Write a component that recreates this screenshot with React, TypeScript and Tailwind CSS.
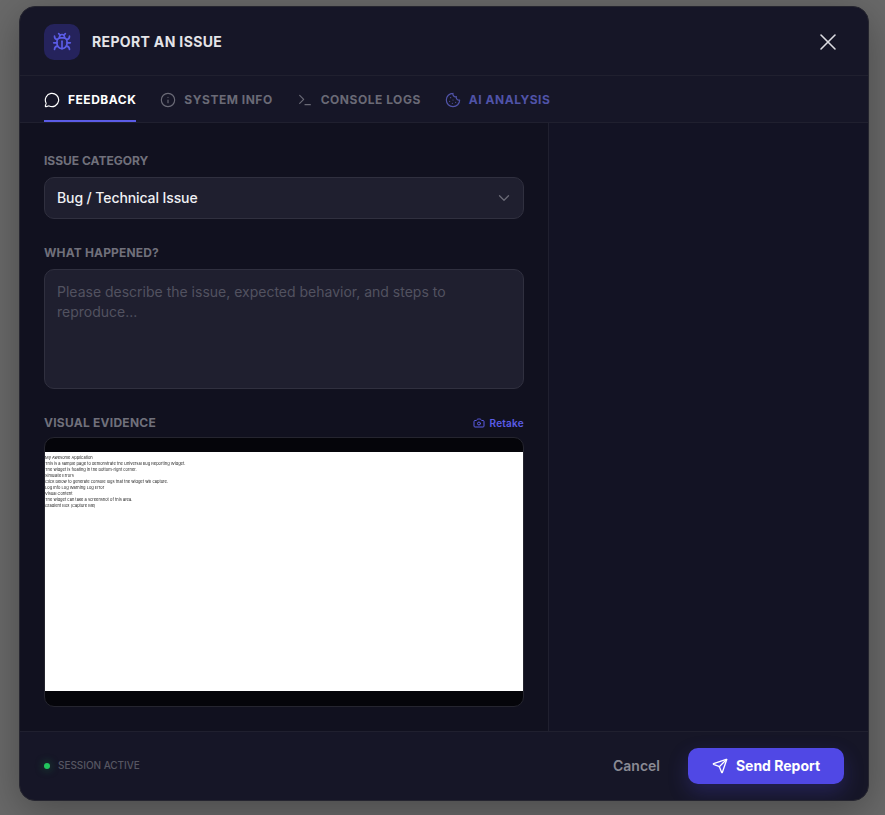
import React from 'react';
import { Bug, Camera, ChevronDown, Cookie, Info, MessageCircle, Send, Terminal, X } from 'lucide-react';

const tabs = [
  { name: 'FEEDBACK', icon: MessageCircle, className: 'text-white border-[#5b5ce6]' },
  { name: 'SYSTEM INFO', icon: Info, className: 'text-[#6a6a76] border-transparent' },
  { name: 'CONSOLE LOGS', icon: Terminal, className: 'text-[#6a6a76] border-transparent' },
  { name: 'AI ANALYSIS', icon: Cookie, className: 'text-[#5053a8] border-transparent' },
];

const shotLines = [
  'My Awesome Application',
  'This is a sample page to demonstrate the Universal Bug Reporting Widget.',
  'The widget is floating in the bottom-right corner.',
  'Simulate Errors',
  'Click below to generate console logs that the widget will capture.',
  'Log Info Log Warning Log Error',
  'Visual Content',
  'The widget can take a screenshot of this area.',
  'Gradient Box (Capture Me)',
];

export default function App() {
  return (
    <div className="h-screen bg-[#696969] pl-[19px] pt-[6px] overflow-hidden font-['Inter',sans-serif]">
      <div className="w-[850px] h-[795px] flex flex-col rounded-2xl bg-[#161627] border border-[#25252f] shadow-[0_10px_40px_rgba(0,0,0,0.3)] overflow-hidden">
        {/* Header */}
        <div className="h-[69px] shrink-0 flex items-center justify-between pl-6 pr-[26px] pt-[1px] border-b border-[#20202f]">
          <div className="flex items-center gap-3">
            <div className="w-9 h-9 rounded-[10px] bg-[#25235c] flex items-center justify-center">
              <Bug size={20} className="text-[#5b5ce6]" />
            </div>
            <div className="text-sm font-bold text-[#e4e4e8] tracking-[0.35px]">REPORT AN ISSUE</div>
          </div>
          <X size={28} strokeWidth={1.3} className="text-[#dcdce2] mt-[1px]" />
        </div>

        {/* Tabs */}
        <div className="h-[47px] shrink-0 flex gap-6 px-6 border-b border-[#20202f]">
          {tabs.map((tab) => (
            <div key={tab.name} className={`flex items-center gap-2 h-[46px] pt-1 border-b-2 ${tab.className}`}>
              <tab.icon size={16} strokeWidth={1.75} />
              <span className="text-xs font-bold tracking-[0.52px]">{tab.name}</span>
            </div>
          ))}
        </div>

        {/* Body */}
        <div className="flex-1 flex min-h-0">
          <div className="w-[529px] border-r border-[#20202f] bg-[#11111f] px-6 pt-[30px]">
            <div className="text-xs font-bold text-[#70707b] leading-4 mb-2">ISSUE CATEGORY</div>
            <div className="h-[42px] flex items-center justify-between pl-3 pr-[10px] rounded-[10px] bg-[#1f1f2f] border border-[#30303f]">
              <span className="text-sm font-medium text-[#f0f0f4] tracking-[-0.1px]">Bug / Technical Issue</span>
              <ChevronDown size={18} strokeWidth={1.75} className="text-[#6a6a76]" />
            </div>

            <div className="text-xs font-bold text-[#70707b] leading-4 mt-[26px] mb-2 tracking-[0.15px]">WHAT HAPPENED?</div>
            <div className="h-[120px] px-3 py-[12px] rounded-[10px] bg-[#1f1f2f] border border-[#30303f] text-sm leading-5 text-[#525260]">
              Please describe the issue, expected behavior, and steps to reproduce...
            </div>

            <div className="flex items-center justify-between mt-[26px] mb-[6px] h-4">
              <div className="text-xs font-bold text-[#70707b] tracking-[0.25px]">VISUAL EVIDENCE</div>
              <div className="flex items-center gap-1 text-[10px] font-semibold text-[#5b5ce6] tracking-[0.25px]">
                <Camera size={12} />
                Retake
              </div>
            </div>
            <div className="h-[270px] pt-[14px] rounded-[10px] bg-[#05050a] border border-[#25252f] overflow-hidden">
              <div className="w-full h-[239px] bg-white overflow-hidden">
                {/* page thumbnail: laid out at double size, then scaled down */}
                <div className="w-[200%] pt-1 text-[8px] leading-[12px] text-[#222] scale-50 origin-top-left blur-[0.4px]">
                  {shotLines.map((line) => (
                    <div key={line}>{line}</div>
                  ))}
                </div>
              </div>
            </div>
          </div>
          <div className="flex-1 bg-[#131324]" />
        </div>

        {/* Footer */}
        <div className="h-[69px] shrink-0 flex items-center justify-between pl-6 pr-6 border-t border-[#20202f]">
          <div className="flex items-center gap-2 mb-[1px]">
            <div className="w-1.5 h-1.5 rounded-full bg-[#22c55e] shadow-[0_0_8px_rgba(34,197,94,0.5)]" />
            <span className="text-[10px] font-medium text-[#565662] tracking-[-0.05px]">SESSION ACTIVE</span>
          </div>
          <div className="flex items-center gap-7">
            <span className="text-sm font-semibold text-[#8a8a94]">Cancel</span>
            <div className="w-[156px] h-9 flex items-center justify-center gap-2 rounded-[10px] bg-[#5048e5] text-sm font-bold text-white shadow-[0_8px_20px_rgba(80,72,229,0.25)]">
              <Send size={16} />
              Send Report
            </div>
          </div>
        </div>
      </div>
    </div>
  );
}
